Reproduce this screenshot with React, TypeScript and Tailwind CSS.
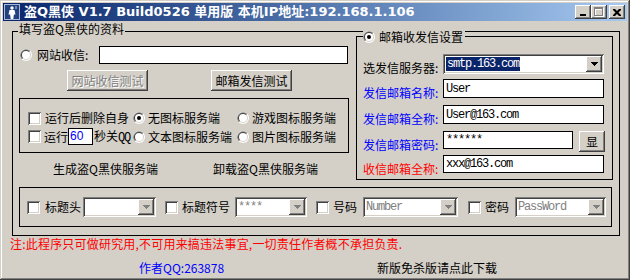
import React from "react";

const cjk = "font-['Noto_Sans_CJK_SC',sans-serif]";
const mono = "font-['Liberation_Mono','Noto_Sans_CJK_SC',monospace]";
const sunken =
  "shadow-[inset_1px_1px_#808080,inset_-1px_-1px_#ffffff,inset_2px_2px_#404040,inset_-2px_-2px_#d4d0c8]";
const raised =
  "shadow-[inset_-1px_-1px_#404040,inset_1px_1px_#ffffff,inset_-2px_-2px_#808080,inset_2px_2px_#d4d0c8]";

function Check() {
  return <span className={`block w-[13px] h-[13px] shrink-0 bg-white ${sunken}`} />;
}

function Radio({ on = false }: { on?: boolean }) {
  return (
    <svg width="12" height="12" viewBox="0 0 12 12" className="shrink-0">
      <circle cx="6" cy="6" r="6" fill="#fff" />
      <path d="M1.76 10.24A6 6 0 0 1 10.24 1.76Z" fill="#808080" />
      <circle cx="6" cy="6" r="5" fill="#d4d0c8" />
      <path d="M2.46 9.54A5 5 0 0 1 9.54 2.46Z" fill="#404040" />
      <circle cx="6" cy="6" r="4" fill="#fff" />
      {on && <circle cx="6" cy="6" r="2" fill="#000" />}
    </svg>
  );
}

function Drop({ off = false }: { off?: boolean }) {
  return (
    <span className={`flex w-[16px] h-[16px] shrink-0 items-center justify-center bg-[#d4d0c8] ${raised}`}>
      <svg width="7" height="4" viewBox="0 0 7 4">
        <path d="M0 0h7v1h-1v1h-1v1h-1v1h-1v-1h-1v-1h-1v-1h-1z" fill={off ? "#808080" : "#000"} />
      </svg>
    </span>
  );
}

function Combo({ className, children, off = false }: { className: string; children?: React.ReactNode; off?: boolean }) {
  return (
    <div className={`flex h-[20px] items-center bg-white p-[2px] ${sunken} ${className}`}>
      <div
        className={`flex-1 min-w-0 pl-[1px] text-[12px] tracking-[-1.2px] leading-[14px] ${mono} ${
          off ? "text-[#808080]" : "text-black"
        }`}
      >
        {children}
      </div>
      <Drop off={off} />
    </div>
  );
}

function Edit({ className, children }: { className: string; children?: React.ReactNode }) {
  return (
    <div className={`flex items-center bg-white border border-black pl-[2px] text-[12px] tracking-[-1.2px] ${mono} ${className}`}>
      {children}
    </div>
  );
}

function Btn({ className, children, off = false }: { className: string; children: React.ReactNode; off?: boolean }) {
  return (
    <div
      className={`flex items-center justify-center bg-[#d4d0c8] text-[12px] ${raised} ${className} ${
        off ? "text-[#808080] [text-shadow:1px_1px_0_#ffffff]" : "text-black"
      }`}
    >
      {children}
    </div>
  );
}

function CapBtn({ children }: { children: React.ReactNode }) {
  return (
    <span className={`flex w-[16px] h-[14px] items-center justify-center bg-[#d4d0c8] ${raised}`}>{children}</span>
  );
}

export default function App() {
  return (
    <div
      className={`w-[630px] h-[280px] flex flex-col bg-[#d4d0c8] p-[3px] text-[12px] leading-[14px] text-black ${cjk} shadow-[inset_-1px_-1px_#404040,inset_1px_1px_#d4d0c8,inset_-2px_-2px_#808080,inset_2px_2px_#ffffff]`}
    >
      {/* title bar */}
      <div className="h-[18px] shrink-0 flex items-center bg-linear-to-r from-[#0a246a] to-[#a6caf0] pl-[1px] pr-[2px]">
        <svg width="16" height="16" viewBox="0 0 16 16">
          <rect x="0.5" y="0.5" width="15" height="15" fill="#23407f" stroke="#a8b8d8" />
          <circle cx="8" cy="4" r="1.7" fill="#fff" />
          <path d="M5.5 6h5l1 4.5h-1.6l-.6 4.5h-2.6l-.6-4.5H4.5z" fill="#fff" />
          <path d="M11 2h2v3h-2z" fill="#6f8cc4" />
        </svg>
        <span className="ml-[4px] text-white font-bold text-[13px] whitespace-nowrap font-['DejaVu_Sans','Noto_Sans_CJK_SC',sans-serif]">
          盗Q黑侠 V1.7 Build0526 单用版 本机IP地址:192.168.1.106
        </span>
        <div className="ml-auto flex items-center">
          <CapBtn>
            <svg width="8" height="7" viewBox="0 0 8 7">
              <rect x="1" y="5" width="6" height="2" fill="#000" />
            </svg>
          </CapBtn>
          <CapBtn>
            <svg width="10" height="10" viewBox="0 0 10 10">
              <path d="M1 1h9v9H1zM2 3v6h7V3z" fill="#fff" fillRule="evenodd" />
              <path d="M0 0h9v9H0zM1 2v6h7V2z" fill="#808080" fillRule="evenodd" />
            </svg>
          </CapBtn>
          <span className="ml-[2px]">
            <CapBtn>
              <svg width="8" height="7" viewBox="0 0 8 7">
                <path d="M0 0h2l2 2 2-2h2v1L5.5 3.5 8 6v1H6L4 5 2 7H0V6l2.5-2.5L0 1z" fill="#000" />
              </svg>
            </CapBtn>
          </span>
        </div>
      </div>

      {/* outer group */}
      <div className="relative mt-[10px] ml-[9px] w-[608px] h-[205px] shrink-0 border border-black">
        <span className="absolute left-[5px] top-[-10px] px-[1px] bg-[#d4d0c8] leading-[14px]">填写盗Q黑侠的资料</span>

        <div className="flex">
          {/* left column */}
          <div className="w-[343px] flex flex-col">
            <div className="mt-[14px] h-[18px] flex items-center">
              <span className="ml-[7px]">
                <Radio />
              </span>
              <span className="ml-[5px] w-[62px]">网站收信:</span>
              <Edit className="w-[249px] h-[18px]" />
            </div>

            <div className="mt-[6px] flex">
              <Btn off className="ml-[54px] w-[81px] h-[21px]">
                网站收信测试
              </Btn>
              <Btn className="ml-[63px] w-[81px] h-[21px]">邮箱发信测试</Btn>
            </div>

            <div className="mt-[7px] ml-[6px] w-[330px] h-[55px] border border-black flex flex-col pt-[11px] whitespace-nowrap">
              <div className="h-[16px] flex items-center">
                <div className="ml-[8px] w-[105px] flex items-center">
                  <Check />
                  <span className="ml-[4px]">运行后删除自身</span>
                </div>
                <div className="w-[104px] flex items-center">
                  <Radio on />
                  <span className="ml-[3px]">无图标服务端</span>
                </div>
                <div className="flex items-center">
                  <Radio />
                  <span className="ml-[3px]">游戏图标服务端</span>
                </div>
              </div>
              <div className="mt-[2px] h-[17px] flex items-center">
                <div className="ml-[8px] w-[105px] flex items-center">
                  <Check />
                  <span className="ml-[3px]">运行</span>
                  <span className="w-[25px] h-[17px] bg-white border border-black text-[#0000ff] pl-[1px] leading-[15px] text-[12px] font-['Liberation_Sans',sans-serif]">
                    60
                  </span>
                  <span className="ml-[1px]">
                    秒关<span className={`text-[12px] tracking-[-1.2px] ${mono}`}>QQ</span>
                  </span>
                </div>
                <div className="w-[104px] flex items-center">
                  <Radio />
                  <span className="ml-[3px]">文本图标服务端</span>
                </div>
                <div className="flex items-center">
                  <Radio />
                  <span className="ml-[3px]">图片图标服务端</span>
                </div>
              </div>
            </div>

            <div className="mt-[9px] flex whitespace-nowrap">
              <span className="ml-[40px] w-[160px]">生成盗Q黑侠服务端</span>
              <span>卸载盗Q黑侠服务端</span>
            </div>
          </div>

          {/* mail settings group */}
          <div className="relative mt-[4px] w-[257px] h-[144px] border border-black flex flex-col pl-[6px] pt-[17px]">
            <span className="absolute left-[6px] top-[-7px] h-[14px] pr-[2px] flex items-center bg-[#d4d0c8]">
              <Radio on />
              <span className="ml-[4px]">邮箱收发信设置</span>
            </span>

            <div className="flex items-start">
              <span className="mt-[7px] w-[80px] whitespace-nowrap">选发信服务器:</span>
              <Combo className="w-[161px]">
                <span className="bg-[#0a246a] text-white px-[1px]">smtp.163.com</span>
              </Combo>
            </div>
            <div className="mt-[4px] flex items-start">
              <span className="mt-[7px] w-[80px] whitespace-nowrap text-[#0000ff]">发信邮箱名称:</span>
              <Edit className="w-[161px] h-[19px]">User</Edit>
            </div>
            <div className="mt-[5px] flex items-start">
              <span className="mt-[7px] w-[80px] whitespace-nowrap text-[#0000ff]">发信邮箱全称:</span>
              <Edit className="w-[161px] h-[19px]">User@163.com</Edit>
            </div>
            <div className="mt-[5px] flex items-start">
              <span className="mt-[7px] w-[80px] whitespace-nowrap text-[#0000ff]">发信邮箱密码:</span>
              <Edit className="w-[130px] h-[18px]">******</Edit>
              <Btn className="ml-[6px] w-[26px] h-[21px]">显</Btn>
            </div>
            <div className="mt-[3px] flex items-start">
              <span className="mt-[7px] w-[80px] whitespace-nowrap text-[#ff0000]">收信邮箱全称:</span>
              <Edit className="w-[161px] h-[18px]">xxx@163.com</Edit>
            </div>
          </div>
        </div>

        {/* bottom options */}
        <div className="mt-[7px] ml-[6px] w-[593px] h-[40px] border border-black flex items-center whitespace-nowrap">
          <div className="ml-[7px] w-[56px] flex items-center">
            <Check />
            <span className="ml-[5px]">标题头</span>
          </div>
          <Combo off className="w-[73px]" />
          <div className="ml-[9px] w-[70px] flex items-center">
            <Check />
            <span className="ml-[4px]">标题符号</span>
          </div>
          <Combo off className="w-[72px]">
            ****
          </Combo>
          <div className="ml-[9px] w-[47px] flex items-center">
            <Check />
            <span className="ml-[4px]">号码</span>
          </div>
          <Combo off className="w-[95px]">
            Number
          </Combo>
          <div className="ml-[10px] w-[47px] flex items-center">
            <Check />
            <span className="ml-[4px]">密码</span>
          </div>
          <Combo off className="w-[91px]">
            PassWord
          </Combo>
        </div>
      </div>

      {/* footer */}
      <div className="mt-[1px] ml-[7px] text-[#ff0000] whitespace-nowrap tracking-[0.2px]">
        注:此程序只可做研究用,不可用来搞违法事宜,一切责任作者概不承担负责.
      </div>
      <div className="mt-[10px] flex whitespace-nowrap">
        <span className="ml-[136px] w-[238px] text-[#0000ff]">作者QQ:263878</span>
        <span>新版免杀版请点此下载</span>
      </div>
    </div>
  );
}
